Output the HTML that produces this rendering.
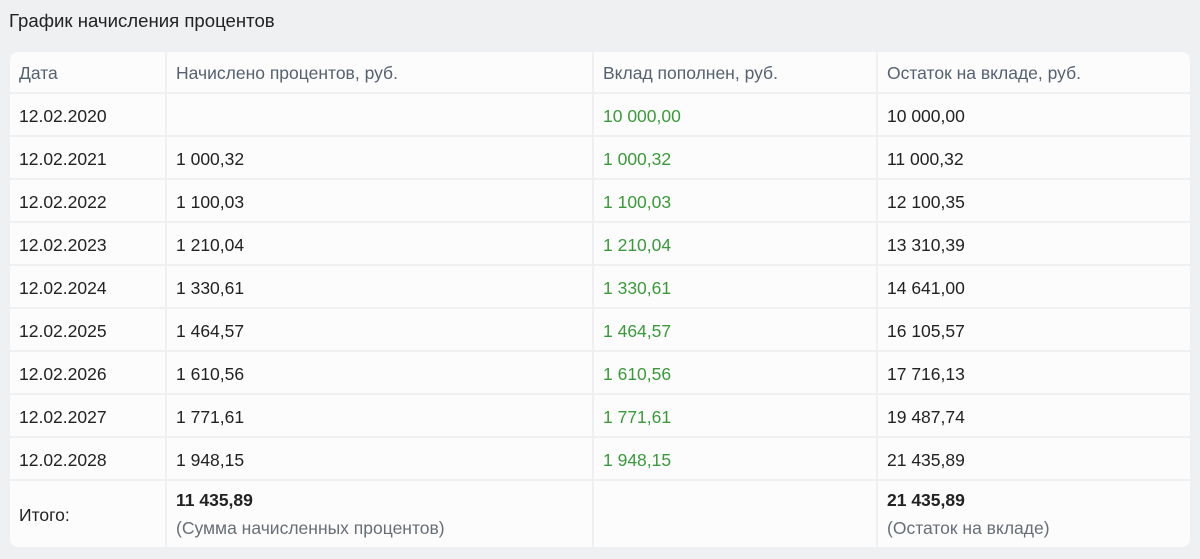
<!DOCTYPE html>
<html><head><meta charset="utf-8"><style>
body{margin:0;width:1200px;height:559px;background:#eef0f2;font-family:"Liberation Sans",sans-serif;position:relative;overflow:hidden}
h1{position:absolute;left:9px;top:10px;margin:0;font-size:18.6px;font-weight:normal;color:#222}
table{position:absolute;left:10px;top:52px;width:1180px;border-collapse:collapse;background:#fcfcfc;border-radius:8px;overflow:hidden;font-size:17.5px;color:#222}
td,th{padding:3px 0 0 9px;text-align:left;border-left:2px solid #eff0f2;border-top:2px solid #eff0f2;height:38px;font-weight:normal;box-sizing:content-box}
tr td:first-child,tr th:first-child{border-left:none}
th{color:#556170;height:37px;border-top:none}
td.g{color:#3a9a3a}
.f td{height:64px;vertical-align:top;padding-top:0}
.f td div{margin-top:9px}
.f small{display:block;margin-top:7px;font-size:17.5px;color:#666e78}
</style></head><body>
<h1>График начисления процентов</h1>
<table>
<colgroup><col style="width:156px"><col style="width:427px"><col style="width:284px"><col></colgroup>
<tr><th>Дата</th><th>Начислено процентов, руб.</th><th>Вклад пополнен, руб.</th><th>Остаток на вкладе, руб.</th></tr>
<tr><td>12.02.2020</td><td></td><td class="g">10 000,00</td><td>10 000,00</td></tr>
<tr><td>12.02.2021</td><td>1 000,32</td><td class="g">1 000,32</td><td>11 000,32</td></tr>
<tr><td>12.02.2022</td><td>1 100,03</td><td class="g">1 100,03</td><td>12 100,35</td></tr>
<tr><td>12.02.2023</td><td>1 210,04</td><td class="g">1 210,04</td><td>13 310,39</td></tr>
<tr><td>12.02.2024</td><td>1 330,61</td><td class="g">1 330,61</td><td>14 641,00</td></tr>
<tr><td>12.02.2025</td><td>1 464,57</td><td class="g">1 464,57</td><td>16 105,57</td></tr>
<tr><td>12.02.2026</td><td>1 610,56</td><td class="g">1 610,56</td><td>17 716,13</td></tr>
<tr><td>12.02.2027</td><td>1 771,61</td><td class="g">1 771,61</td><td>19 487,74</td></tr>
<tr><td>12.02.2028</td><td>1 948,15</td><td class="g">1 948,15</td><td>21 435,89</td></tr>
<tr class="f"><td style="vertical-align:middle;padding-top:2px">Итого:</td><td><div><b>11 435,89</b><small>(Сумма начисленных процентов)</small></div></td><td></td><td><div><b>21 435,89</b><small>(Остаток на вкладе)</small></div></td></tr>
</table>
</body></html>
